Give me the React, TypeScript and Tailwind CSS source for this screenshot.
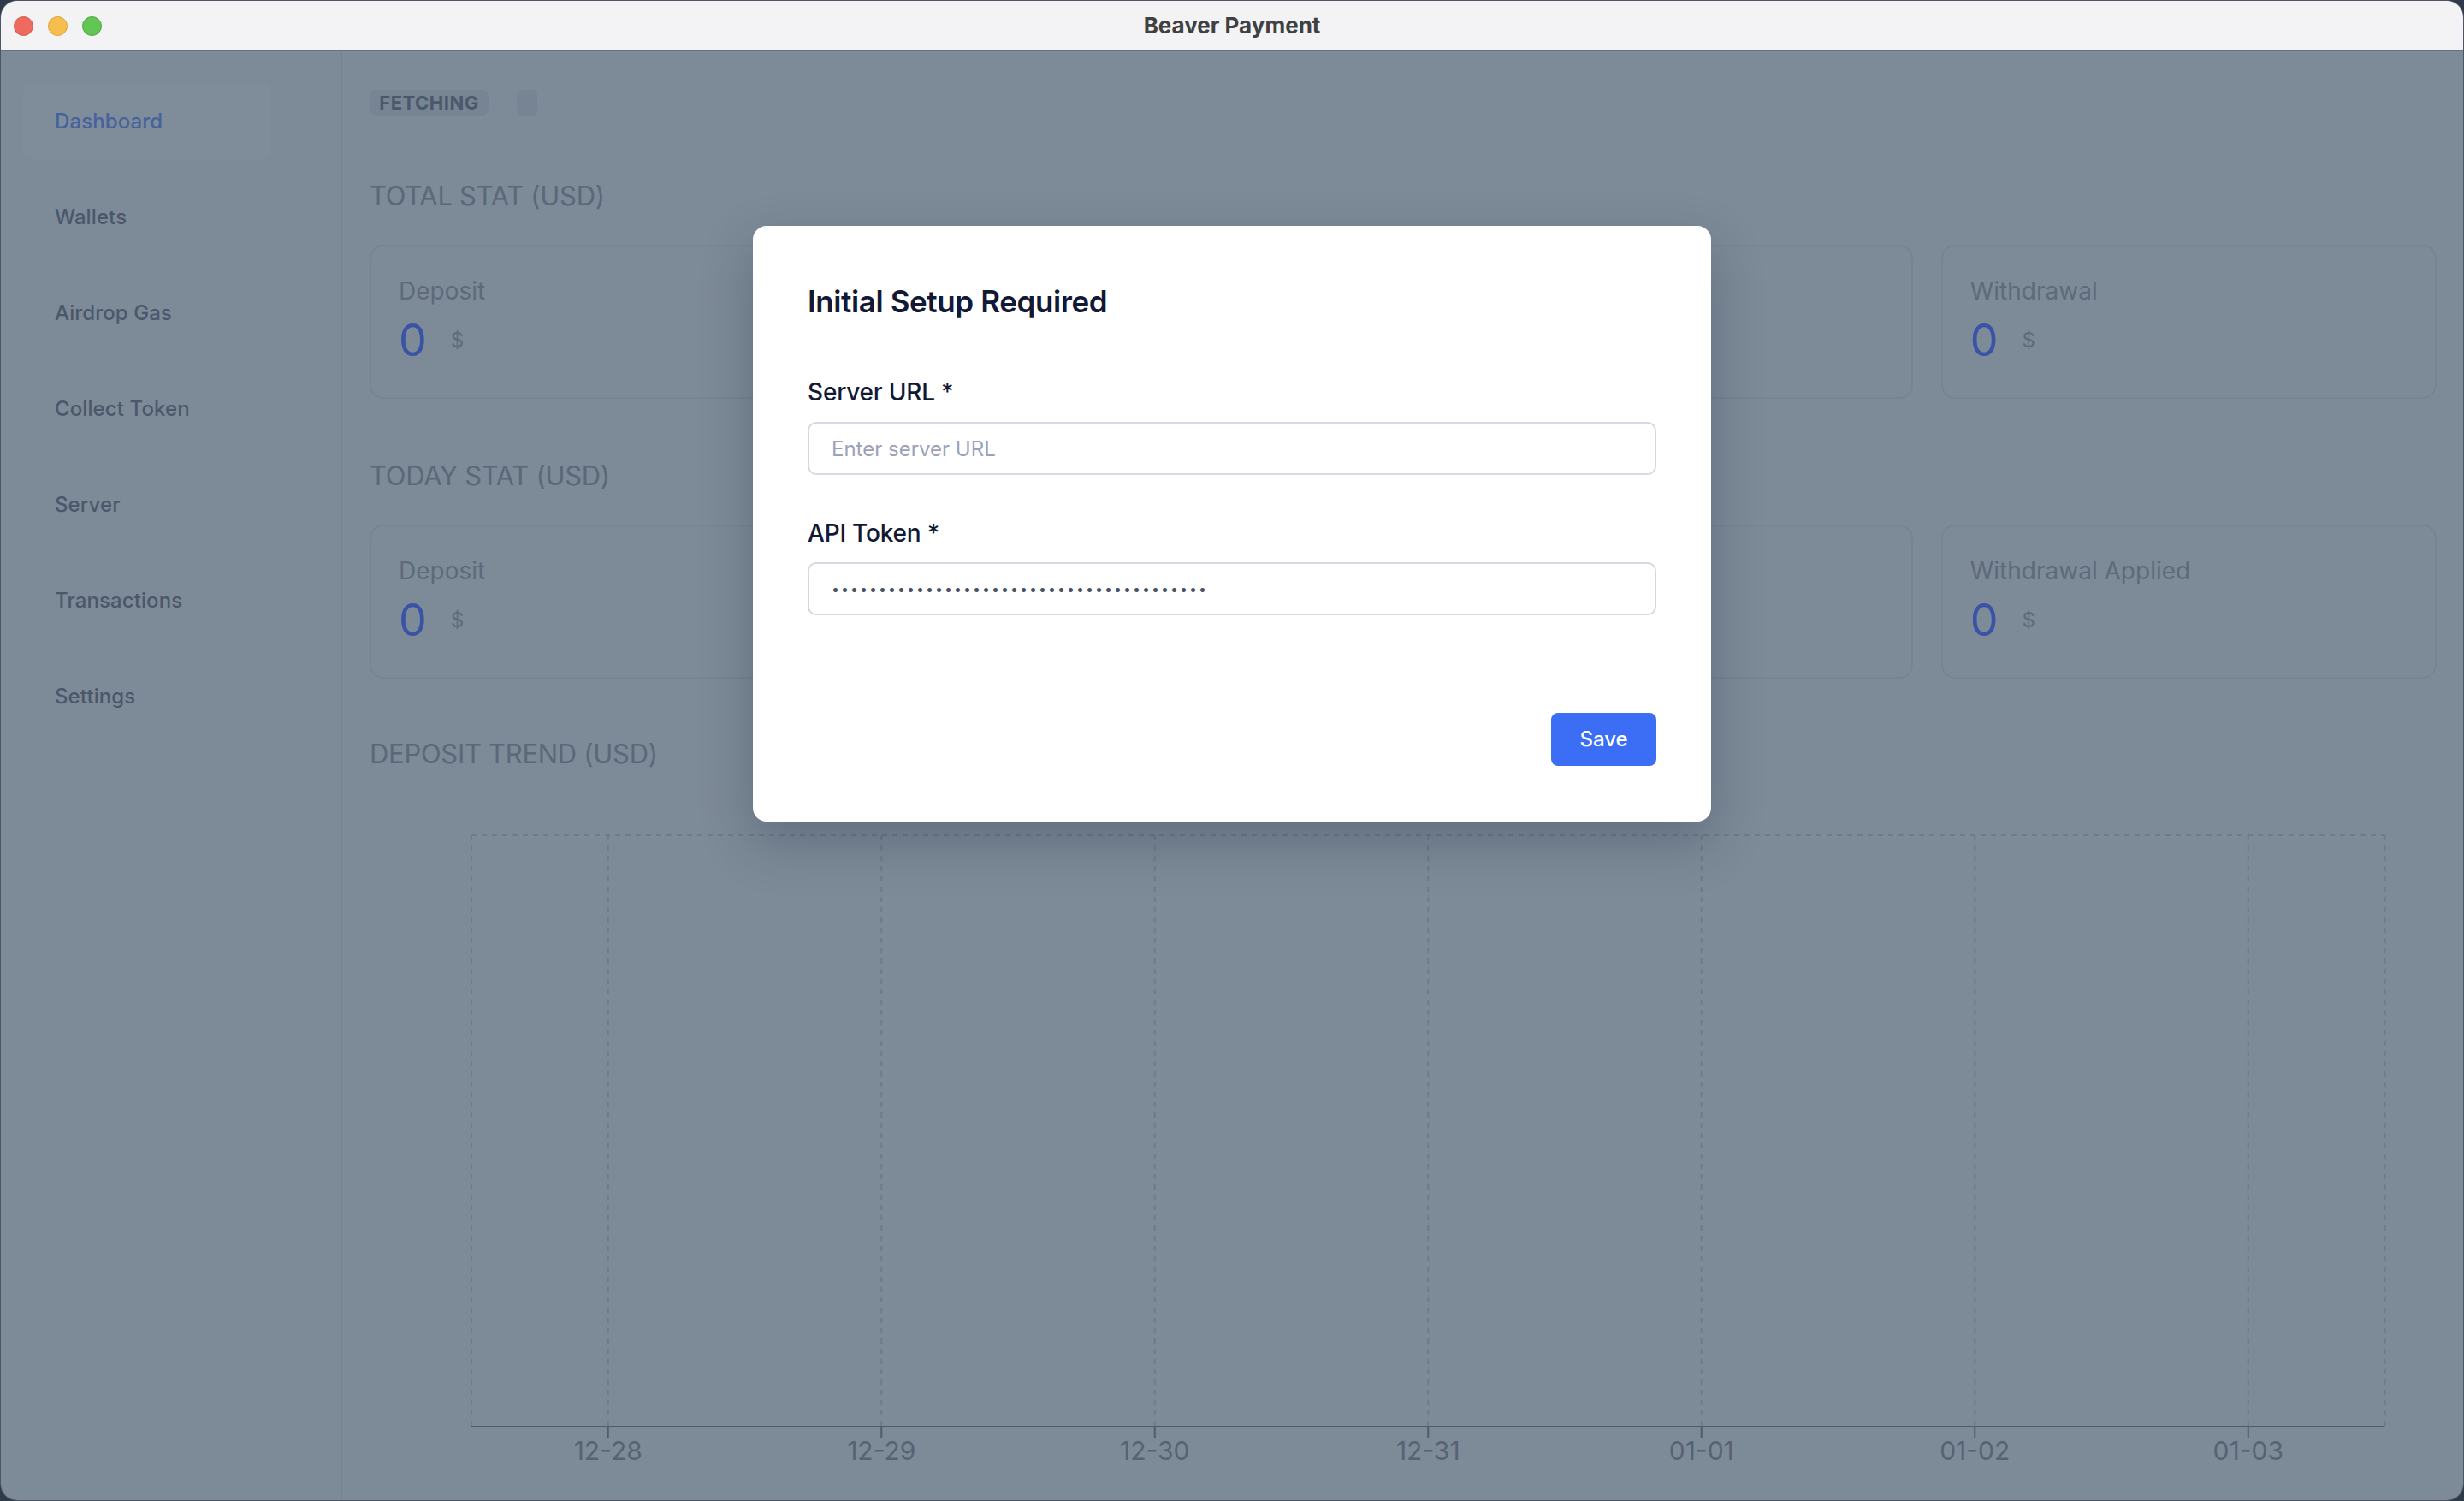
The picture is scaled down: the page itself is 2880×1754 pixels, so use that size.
import React from "react";

const navItems = ["Dashboard", "Wallets", "Airdrop Gas", "Collect Token", "Server", "Transactions", "Settings"];

// middle two cards of each row sit behind the setup modal
const totalStats = ["Deposit", "", "", "Withdrawal"];
const todayStats = ["Deposit", "", "", "Withdrawal Applied"];

const days = ["12-28", "12-29", "12-30", "12-31", "01-01", "01-02", "01-03"];

function TitleBar() {
    return (
        <div className="relative flex h-[59px] shrink-0 items-center justify-center border-b-2 border-[#67727f] bg-[#f3f3f5]">
            <div className="absolute left-[15px] top-[18px] flex gap-[17px]">
                <span className="h-[23px] w-[23px] rounded-full border border-[#d9574c] bg-[#ee6a5f]" />
                <span className="h-[23px] w-[23px] rounded-full border border-[#d9a33c] bg-[#f5be4f]" />
                <span className="h-[23px] w-[23px] rounded-full border border-[#4fa83f] bg-[#62c554]" />
            </div>
            <span className="text-[26px] font-bold text-[#404040]">Beaver Payment</span>
        </div>
    );
}

function Sidebar() {
    return (
        <aside className="w-[399px] shrink-0 border-r-2 border-[#758290] px-[26px] pt-[38px]">
            <nav className="flex flex-col gap-[24px]">
                {navItems.map((item, i) => (
                    <div
                        key={item}
                        className={`flex h-[88px] w-[290px] items-center rounded-[8px] px-[37px] text-[24px] font-medium tracking-[0.1px] ${i === 0 ? "bg-[#7f8c9a] text-[#46629c]" : "text-[#4b576a]"}`}
                    >
                        {item}
                    </div>
                ))}
            </nav>
        </aside>
    );
}

function StatCard({ label }: { label: string }) {
    return (
        <div className="h-[180px] rounded-[16px] border-2 border-[#778492] px-[32px] pt-[32px]">
            {label && (
                <>
                    <div className="text-[28px] leading-[40px] text-[#5e6a7a]">{label}</div>
                    <div className="mt-[10px] flex items-center">
                        <span className="text-[52px] leading-[56px] text-[#3b53a6]">0</span>
                        <span className="ml-[28px] text-[24px] text-[#5e6a7a]">$</span>
                    </div>
                </>
            )}
        </div>
    );
}

function Chart() {
    const left = 119;
    const band = 319.5;
    const right = left + band * 7;
    const top = 15;
    const axis = 706;
    return (
        <svg width="2416" height="780" className="mt-[60px] block">
            <line x1={left} y1={top} x2={right} y2={top} stroke="#6e7b89" strokeWidth="2" strokeDasharray="6 6" />
            <line x1={left} y1={top} x2={left} y2={axis} stroke="#6e7b89" strokeWidth="2" strokeDasharray="6 6" />
            <line x1={right} y1={top} x2={right} y2={axis} stroke="#6e7b89" strokeWidth="2" strokeDasharray="6 6" />
            {days.map((d, i) => {
                const x = left + band / 2 + i * band;
                return (
                    <g key={d}>
                        <line x1={x} y1={top} x2={x} y2={axis} stroke="#6e7b89" strokeWidth="2" strokeDasharray="6 6" />
                        <line x1={x} y1={axis} x2={x} y2={axis + 13} stroke="#505c6b" strokeWidth="2" />
                        <text x={x} y={745} textAnchor="middle" fontSize="30" fill="#566373" fontFamily="Inter, sans-serif">
                            {d}
                        </text>
                    </g>
                );
            })}
            <line x1={left} y1={axis} x2={right} y2={axis} stroke="#505c6b" strokeWidth="2" />
        </svg>
    );
}

function SetupModal() {
    return (
        <div className="absolute inset-x-0 bottom-0 top-[60px] flex justify-center pt-[203px]">
            <div className="h-[696px] w-[1120px] rounded-[16px] bg-white px-[64px] pt-[64px] shadow-[0_24px_60px_rgba(30,41,59,0.28)]">
                <h2 className="text-[35px] font-semibold leading-[48px] tracking-[-0.4px] text-[#111936]">Initial Setup Required</h2>

                <label className="mt-[62px] block text-[28px] font-medium leading-[40px] tracking-[-0.2px] text-[#111936]">Server URL *</label>
                <input
                    className="mt-[15px] block h-[62px] w-full rounded-[10px] border-2 border-[#d6d9e2] px-[26px] text-[24px] outline-none placeholder:text-[#9ba1b8]"
                    placeholder="Enter server URL"
                />

                <label className="mt-[48px] block text-[28px] font-medium leading-[40px] tracking-[-0.2px] text-[#111936]">API Token *</label>
                <input
                    type="password"
                    readOnly
                    value={"x".repeat(40)}
                    className="mt-[14px] block h-[62px] w-full rounded-[10px] border-2 border-[#d6d9e2] px-[26px] text-[16px] tracking-[2px] text-[#4b5064] outline-none"
                />

                <div className="mt-[114px] flex justify-end">
                    <button className="h-[62px] w-[123px] rounded-[8px] bg-[#3c6ef5] text-[24px] font-medium text-white">Save</button>
                </div>
            </div>
        </div>
    );
}

export default function App() {
    return (
        <div className="h-[1754px] w-[2880px] bg-[#2e3a48] font-['Inter',sans-serif]">
            <div className="relative flex h-full flex-col overflow-hidden rounded-[20px] border border-[#4d5663]">
                <TitleBar />
                <div className="flex min-h-0 flex-1 bg-[#7d8a98]">
                    <Sidebar />
                    <main className="flex-1 px-[32px] pt-[45px]">
                        <div className="flex items-center gap-[33px]">
                            <span className="flex h-[30px] w-[139px] items-center justify-center rounded-[8px] bg-[#768494] text-[22px] font-bold tracking-[0.5px] text-[#4b586a]">
                                FETCHING
                            </span>
                            <span className="h-[30px] w-[24px] rounded-[6px] bg-[#768494]" />
                        </div>

                        <h3 className="mt-[74px] text-[31px] leading-[40px] tracking-[-0.3px] text-[#5b6878]">TOTAL STAT (USD)</h3>
                        <div className="mt-[37px] grid grid-cols-4 gap-[33px]">
                            {totalStats.map((s, i) => (
                                <StatCard key={i} label={s} />
                            ))}
                        </div>

                        <h3 className="mt-[70px] text-[31px] leading-[40px] tracking-[-0.3px] text-[#5b6878]">TODAY STAT (USD)</h3>
                        <div className="mt-[37px] grid grid-cols-4 gap-[33px]">
                            {todayStats.map((s, i) => (
                                <StatCard key={i} label={s} />
                            ))}
                        </div>

                        <h3 className="mt-[68px] text-[31px] leading-[40px] tracking-[-0.3px] text-[#5b6878]">DEPOSIT TREND (USD)</h3>
                        <Chart />
                    </main>
                </div>
                <SetupModal />
            </div>
        </div>
    );
}
